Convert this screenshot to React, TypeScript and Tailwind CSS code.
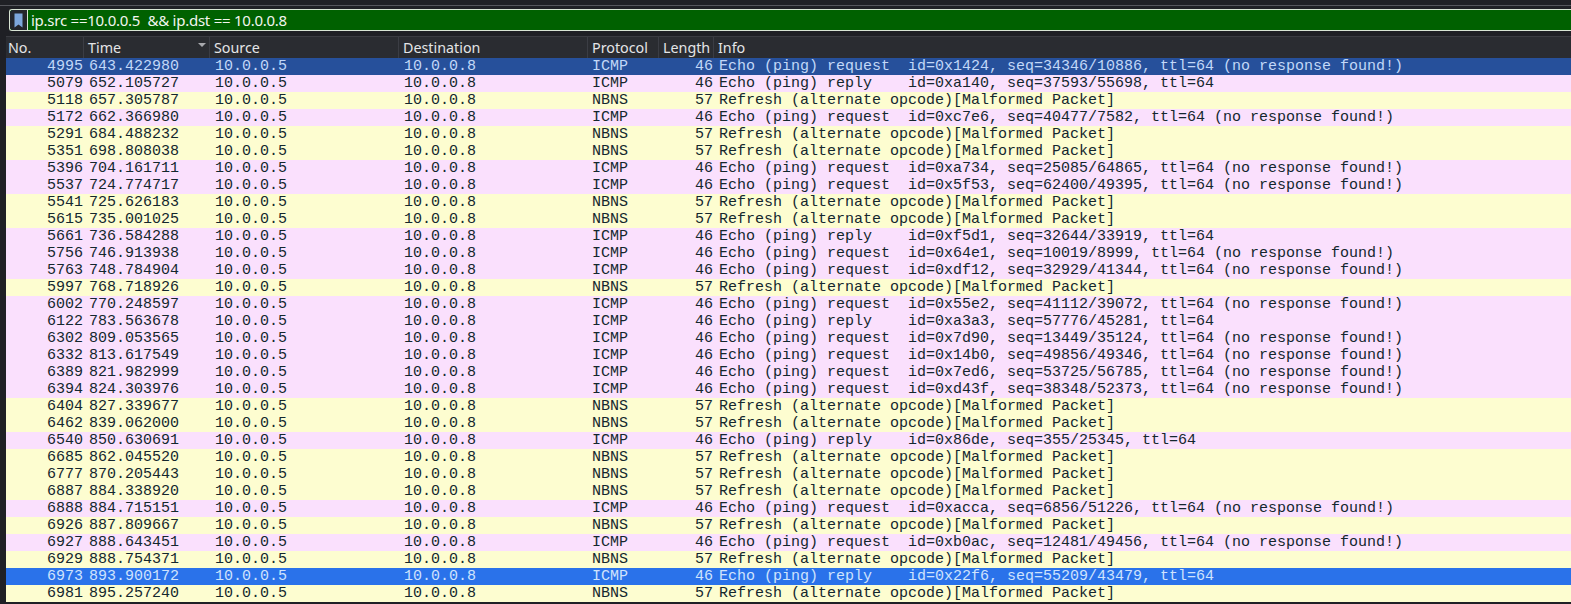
const REQ = "Echo (ping) request  ";
const REP = "Echo (ping) reply    ";
const NR = ", ttl=64 (no response found!)";
const NBNS = "Refresh (alternate opcode)[Malformed Packet]";

type Packet = { no: number; time: string; info?: string };

const packets: Packet[] = [
  { no: 4995, time: "643.422980", info: REQ + "id=0x1424, seq=34346/10886" + NR },
  { no: 5079, time: "652.105727", info: REP + "id=0xa140, seq=37593/55698, ttl=64" },
  { no: 5118, time: "657.305787" },
  { no: 5172, time: "662.366980", info: REQ + "id=0xc7e6, seq=40477/7582" + NR },
  { no: 5291, time: "684.488232" },
  { no: 5351, time: "698.808038" },
  { no: 5396, time: "704.161711", info: REQ + "id=0xa734, seq=25085/64865" + NR },
  { no: 5537, time: "724.774717", info: REQ + "id=0x5f53, seq=62400/49395" + NR },
  { no: 5541, time: "725.626183" },
  { no: 5615, time: "735.001025" },
  { no: 5661, time: "736.584288", info: REP + "id=0xf5d1, seq=32644/33919, ttl=64" },
  { no: 5756, time: "746.913938", info: REQ + "id=0x64e1, seq=10019/8999" + NR },
  { no: 5763, time: "748.784904", info: REQ + "id=0xdf12, seq=32929/41344" + NR },
  { no: 5997, time: "768.718926" },
  { no: 6002, time: "770.248597", info: REQ + "id=0x55e2, seq=41112/39072" + NR },
  { no: 6122, time: "783.563678", info: REP + "id=0xa3a3, seq=57776/45281, ttl=64" },
  { no: 6302, time: "809.053565", info: REQ + "id=0x7d90, seq=13449/35124" + NR },
  { no: 6332, time: "813.617549", info: REQ + "id=0x14b0, seq=49856/49346" + NR },
  { no: 6389, time: "821.982999", info: REQ + "id=0x7ed6, seq=53725/56785" + NR },
  { no: 6394, time: "824.303976", info: REQ + "id=0xd43f, seq=38348/52373" + NR },
  { no: 6404, time: "827.339677" },
  { no: 6462, time: "839.062000" },
  { no: 6540, time: "850.630691", info: REP + "id=0x86de, seq=355/25345, ttl=64" },
  { no: 6685, time: "862.045520" },
  { no: 6777, time: "870.205443" },
  { no: 6887, time: "884.338920" },
  { no: 6888, time: "884.715151", info: REQ + "id=0xacca, seq=6856/51226" + NR },
  { no: 6926, time: "887.809667" },
  { no: 6927, time: "888.643451", info: REQ + "id=0xb0ac, seq=12481/49456" + NR },
  { no: 6929, time: "888.754371" },
  { no: 6973, time: "893.900172", info: REP + "id=0x22f6, seq=55209/43479, ttl=64" },
  { no: 6981, time: "895.257240" },
];

const COLS = "grid grid-cols-[78px_126px_189px_189px_71px_55px_1fr]";

function rowColor(p: Packet) {
  if (p.no === 4995) return "bg-[#26509b] text-[#c2d8f8]";
  if (p.no === 6973) return "bg-[#2a72ea] text-[#cfe3fd]";
  if (p.info) return "bg-[#fae0fd] text-[#14272e]";
  return "bg-[#fdfdd0] text-[#14272e]";
}

function HeaderCell({ label, sort, first }: { label: string; sort?: boolean; first?: boolean }) {
  return (
    <div className={`relative flex h-full items-center border-r border-[#3b3d44] last:border-r-0 ${first ? "pl-[2px]" : "pl-[4px]"}`}>
      {label}
      {sort && (
        <span className="absolute right-[3px] top-[6px] h-0 w-0 border-x-[4px] border-t-[4px] border-x-transparent border-t-[#a8a9ad]" />
      )}
    </div>
  );
}

export default function App() {
  return (
    <div className="h-[604px] w-[1571px] overflow-hidden bg-[#1f2025] font-['Noto_Sans',sans-serif]">
      <div className="h-[5px]" />
      <div className="h-[1px] bg-[#55565c]" />
      <div className="h-[3px]" />
      {/* Filter bar */}
      <div className="ml-[9px] flex h-[22px] items-center rounded-l-[3px] border-y border-l border-[#d9e5d5] bg-[#006100] text-[15px] tracking-[-0.25px] text-[#f2f5ef]">
        <div className="flex h-full w-[18px] items-center justify-center rounded-l-[3px] border-r border-[#d9e5d5] bg-[#24262c]">
          <svg width="9" height="15" viewBox="0 0 9 15">
            <path d="M0.5 0.5h8v14l-4-3-4 3z" fill="#7da7dc" />
          </svg>
        </div>
        <span className="ml-[3px] whitespace-pre">ip.src ==10.0.0.5  && ip.dst == 10.0.0.8</span>
      </div>
      <div className="h-[5px]" />
      {/* Table */}
      <div className="ml-[6px]">
        <div className={`${COLS} h-[22px] border-t border-[#3a3b41] bg-[#2a2c31] text-[14.3px] text-[#e4e5e7]`}>
          <HeaderCell label="No." first />
          <HeaderCell label="Time" sort />
          <HeaderCell label="Source" />
          <HeaderCell label="Destination" />
          <HeaderCell label="Protocol" />
          <HeaderCell label="Length" />
          <HeaderCell label="Info" />
        </div>
        <div className="font-['Liberation_Mono',monospace] text-[15px] leading-[17px]">
          {packets.map((p) => (
            <div key={p.no} className={`${COLS} h-[17px] whitespace-pre ${rowColor(p)}`}>
              <div className="pr-[1px] text-right">{p.no}</div>
              <div className="pl-[5px]">{p.time}</div>
              <div className="pl-[5px]">10.0.0.5</div>
              <div className="pl-[5px]">10.0.0.8</div>
              <div className="pl-[4px]">{p.info ? "ICMP" : "NBNS"}</div>
              <div className="pr-[1px] text-right">{p.info ? 46 : 57}</div>
              <div className="pl-[5px]">{p.info ?? NBNS}</div>
            </div>
          ))}
        </div>
      </div>
    </div>
  );
}
